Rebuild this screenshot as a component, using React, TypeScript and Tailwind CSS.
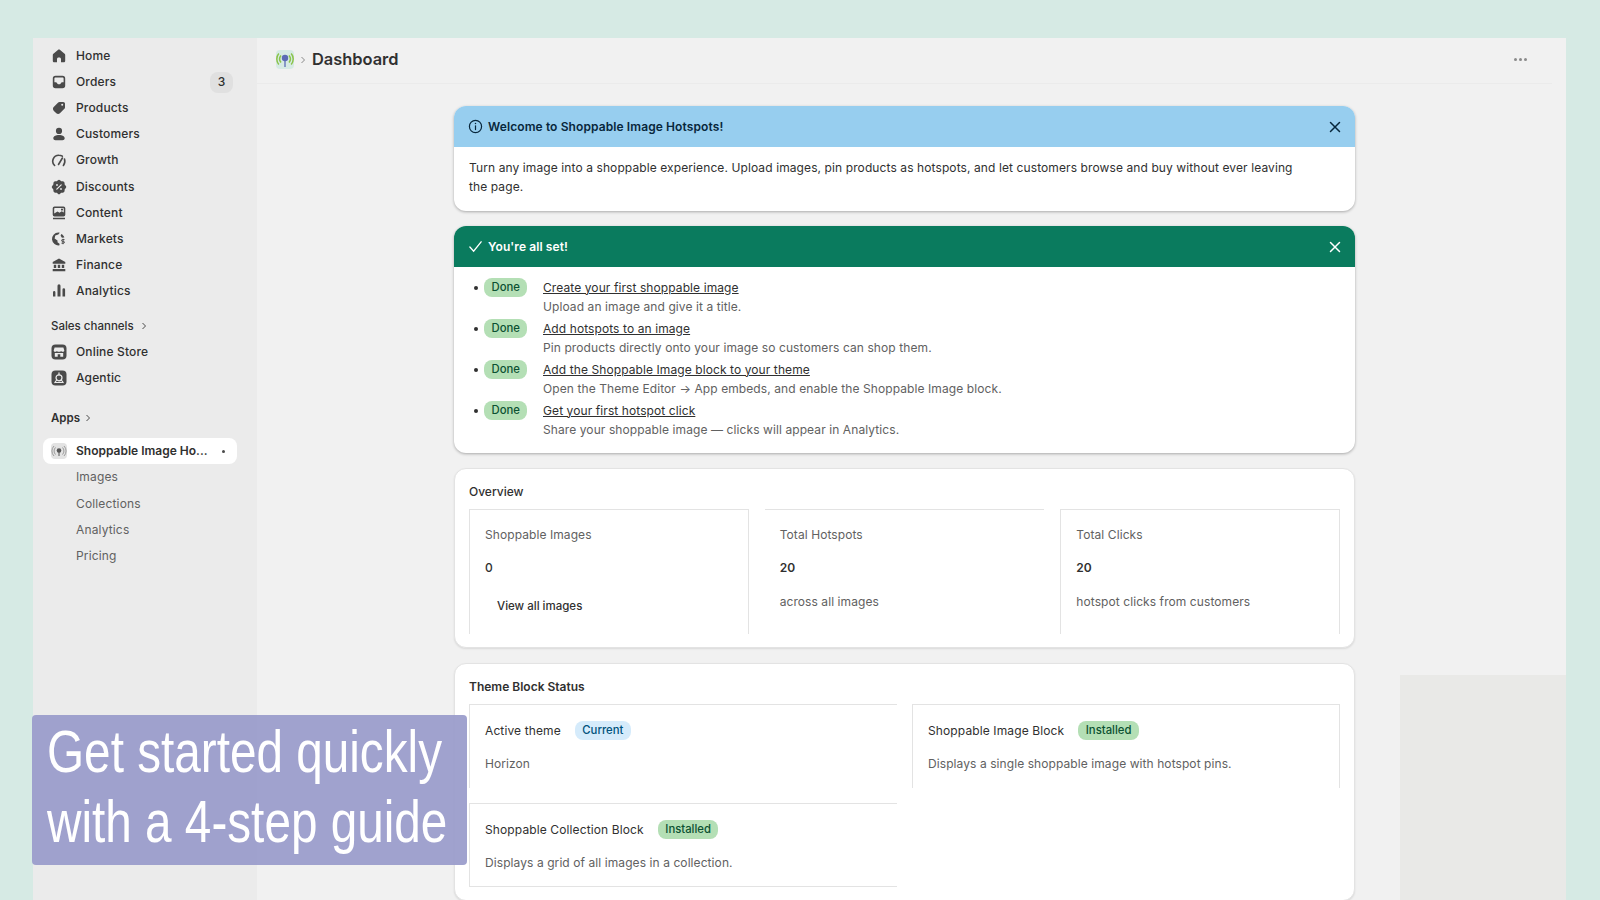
const navIcons: Record<string, React.ReactNode> = {
  home: <path d="M6.900 2 2.400 5.700C2 6 1.800 6.500 1.800 7v5.700c0 .9.700 1.600 1.600 1.600h2.600v-3.200c0-.9.700-1.600 1.600-1.600h.8c.9 0 1.600.7 1.600 1.600v3.200h2.600c.9 0 1.600-.7 1.600-1.600V7c0-.5-.2-1-.6-1.300L9.100 2c-.6-.6-1.600-.6-2.200 0Z" />,
  orders: <path fillRule="evenodd" d="M4.500 1.800h7A2.700 2.700 0 0 1 14.200 4.500v7a2.700 2.700 0 0 1-2.700 2.700h-7a2.700 2.700 0 0 1-2.700-2.700v-7A2.700 2.700 0 0 1 4.500 1.800ZM3.400 8.200V4.600c0-.6.500-1.100 1.100-1.100h7c.6 0 1.100.5 1.100 1.100v3.600h-1.400c-.6 0-1 .3-1.200.8-.2.800-1 1.300-2 1.300s-1.800-.5-2-1.300c-.2-.5-.6-.8-1.200-.8H3.400Z" />,
  products: <path fillRule="evenodd" d="M8.500 2h3.700c1 0 1.800.8 1.800 1.800v3.700c0 .5-.2 1-.6 1.300l-4.500 4.500c-1 1-2.600 1-3.600 0l-2.600-2.600c-1-1-1-2.600 0-3.600l4.500-4.500c.3-.4.800-.6 1.300-.6Zm2.700 3.800a1 1 0 1 0 0-2 1 1 0 0 0 0 2Z" />,
  customers: <path d="M8 1.800a3.100 3.100 0 1 1 0 6.200 3.100 3.100 0 0 1 0-6.200ZM8 9c-3.200 0-5.700 1.300-5.700 3.300 0 1.200 1 1.900 2.200 1.900h7c1.200 0 2.200-.7 2.200-1.900C13.700 10.300 11.200 9 8 9Z" />,
  growth: <g fill="none" stroke="#4a4a4a" strokeWidth="1.600" strokeLinecap="round"><path d="M3.600 13.500A6 6 0 0 1 8 3.200c1.300 0 2.400.4 3.300 1" /><path d="M13.500 7c.7 2.300.3 4.700-1.100 6.500" /><path d="m7.500 12.500 3.900-6.500" /></g>,
  discounts: <><path fillRule="evenodd" d="M6.800 1.300a1.700 1.700 0 0 1 2.400 0l.6.6c.3.300.7.400 1 .4h.9c1 0 1.900.9 1.900 1.900v.9c0 .4.100.8.400 1l.7.7c.7.700.7 1.700 0 2.400l-.7.7c-.3.300-.4.700-.4 1v.9c0 1-.9 1.900-1.900 1.900h-.9c-.4 0-.8.100-1 .4l-.6.6c-.7.700-1.700.700-2.400 0l-.6-.6c-.3-.3-.7-.4-1-.4h-.9c-1 0-1.900-.9-1.900-1.900v-.9c0-.4-.1-.8-.4-1l-.7-.7a1.700 1.700 0 0 1 0-2.400l.7-.7c.3-.3.400-.7.400-1v-.9c0-1 .9-1.900 1.900-1.900h.9c.4 0 .8-.1 1-.4l.6-.6Z" /><path d="m5.800 10.200 4.400-4.400" stroke="#ebebeb" strokeWidth="1.200" strokeLinecap="round" /><circle cx="6" cy="6" r=".9" fill="#ebebeb" /><circle cx="10" cy="10" r=".9" fill="#ebebeb" /></>,
  content: <path fillRule="evenodd" d="M3.500 1.500h9a1.800 1.800 0 0 1 1.800 1.800v6.400a1.800 1.800 0 0 1-1.800 1.800h-9a1.800 1.800 0 0 1-1.800-1.800V3.300a1.800 1.800 0 0 1 1.800-1.800Zm-.3 6.700V3.700c0-.4.300-.7.700-.7h8.200c.4 0 .7.300.7.700v3.900l-2-1.300-2.300 1.500-2-1.200-3.300 1.800ZM11 5.700a1.100 1.100 0 1 0 0-2.200 1.100 1.100 0 0 0 0 2.200ZM2 12.800h12v1.500H2v-1.500Z" />,
  markets: <><path d="M7.300 1.600a6.400 6.400 0 1 0 1.200 12.700v-1.600L6.500 11.200V9.500L3.600 7.400l.7-2.800 3-1 1.500-1.900a6 6 0 0 0-1.500-.1Z" /><path d="M10.300 3c1.400.7 2.500 1.900 3 3.400l-2.400.3-1.300-2 .7-1.700Z" /><path d="M13.500 8.600h-2a.9.900 0 0 0 0 1.800h1a.9.900 0 0 1 0 1.800h-2M12 7.800v5.400" fill="none" stroke="#4a4a4a" strokeWidth="1" /></>,
  finance: <path d="M8 1.500 14.300 5v1.700H1.700V5L8 1.500ZM2.800 7.700h2.400V11H2.800V7.700Zm4 0h2.400V11H6.800V7.700Zm4 0h2.400V11h-2.400V7.700ZM1.700 12h12.600v2.200H1.700V12Z" />,
  analytics: <path d="M6.500 2.800a1.500 1.500 0 0 1 3 0v10.600h-3V2.800ZM11.500 6.500a1.300 1.300 0 0 1 2.600 0v6.900h-2.600V6.500ZM2 9.300a1.200 1.200 0 0 1 2.400 0v4.100H2V9.300Z" />,
  store: <><rect x=".5" y=".5" width="15" height="15" rx="4" /><path d="M3.600 3.500h8.800l.9 3c0 .7-.7 1.300-1.400 1.300-.7 0-1.400-.4-1.800-.9-.3.500-1.200.9-2.100.9s-1.800-.4-2.100-.9c-.4.500-1.100.9-1.800.9-.7 0-1.400-.6-1.400-1.300l.9-3Z" fill="#ebebeb" /><path d="M3.800 9h8.400v3.800H9.300v-2.600H6.700v2.600H3.800V9Z" fill="#ebebeb" /></>,
  agentic: <><rect x=".5" y=".5" width="15" height="15" rx="4" /><circle cx="8" cy="7.800" r="3" fill="none" stroke="#ebebeb" strokeWidth="1.200" /><path d="M3.800 12.500 5.700 10M12.200 12.500 10.300 10M8 2.800v2M4 12.500h8" stroke="#ebebeb" strokeWidth="1.200" strokeLinecap="round" /></>,
}

function NavIcon({ name }: { name: string }) {
  return (
    <svg viewBox="0 0 16 16" fill="#4a4a4a" className="h-4 w-4 shrink-0">
      {navIcons[name]}
    </svg>
  )
}

function Chevron() {
  return (
    <svg viewBox="0 0 8 8" className="h-2 w-2" fill="none" stroke="#4a4a4a" strokeWidth="1">
      <path d="m2.500 1 3 3-3 3" />
    </svg>
  )
}

function CloseIcon({ color }: { color: string }) {
  return (
    <svg viewBox="0 0 12 12" className="h-3 w-3" fill="none" stroke={color} strokeWidth="1.500" strokeLinecap="round">
      <path d="m1.500 1.500 9 9M10.500 1.500l-9 9" />
    </svg>
  )
}

function Badge({ tone, children }: { tone: 'green' | 'blue'; children: string }) {
  return (
    <span className={tone === 'green'
      ? 'inline-flex h-[19px] items-center rounded-lg bg-[#b4dfb5] px-[7.500px] text-[11.300px] font-medium text-[#0c5132]'
      : 'inline-flex h-[19px] items-center rounded-lg bg-[#d5ebfb] px-[7.500px] text-[11.300px] font-medium text-[#00527c]'}>
      {children}
    </span>
  )
}

const mainNav = [
  { icon: 'home', label: 'Home' },
  { icon: 'orders', label: 'Orders', count: 3 },
  { icon: 'products', label: 'Products' },
  { icon: 'customers', label: 'Customers' },
  { icon: 'growth', label: 'Growth' },
  { icon: 'discounts', label: 'Discounts' },
  { icon: 'content', label: 'Content' },
  { icon: 'markets', label: 'Markets' },
  { icon: 'finance', label: 'Finance' },
  { icon: 'analytics', label: 'Analytics' },
]

const steps = [
  { title: 'Create your first shoppable image', desc: 'Upload an image and give it a title.' },
  { title: 'Add hotspots to an image', desc: 'Pin products directly onto your image so customers can shop them.' },
  { title: 'Add the Shoppable Image block to your theme', desc: 'Open the Theme Editor → App embeds, and enable the Shoppable Image block.' },
  { title: 'Get your first hotspot click', desc: 'Share your shoppable image — clicks will appear in Analytics.' },
]

function NavRow({ icon, label, count }: { icon: string; label: string; count?: number }) {
  return (
    <div className="flex h-[26.100px] items-center pl-[18px] pr-6">
      <NavIcon name={icon} />
      <span className="ml-[9px] text-xs font-medium tracking-[0.15px] text-[#303030]">{label}</span>
      {count !== undefined && (
        <span className="ml-auto flex h-[21px] w-[23px] items-center justify-center rounded-lg bg-[#e0e0e0] text-xs font-medium text-[#303030]">{count}</span>
      )}
    </div>
  )
}

function Sidebar() {
  return (
    <aside className="w-[224px] shrink-0 bg-[#ebebeb] pt-[5px]">
      {mainNav.map((item) => <NavRow key={item.label} {...item} />)}
      <div className="mt-[10px] flex h-[25px] items-center gap-1.5 pl-[18px] text-[11.500px] font-medium text-[#303030]">
        Sales channels <Chevron />
      </div>
      <NavRow icon="store" label="Online Store" />
      <NavRow icon="agentic" label="Agentic" />
      <div className="mt-[14px] flex h-[26px] items-center gap-1 pl-[18px] text-[11.500px] font-semibold text-[#303030]">
        Apps <Chevron />
      </div>
      <div className="ml-[10px] mr-[20px] mt-[7px] flex h-[26px] items-center rounded-lg bg-white pl-[8px] pr-[12px]">
        <span className="flex h-4 w-4 items-center justify-center rounded-sm bg-[#e3e3e3]">
          <svg viewBox="0 0 16 16" className="h-4 w-4" fill="none" stroke="#9a9a9a" strokeWidth="1">
            <path d="M4.500 4.500a5 5 0 0 0 0 7M11.500 4.500a5 5 0 0 1 0 7M3 3a7 7 0 0 0 0 10M13 3a7 7 0 0 1 0 10" />
            <circle cx="8" cy="7.500" r="2.300" fill="#555" stroke="none" />
            <path d="M8 9v4" stroke="#555" />
          </svg>
        </span>
        <span className="ml-[9px] text-xs font-semibold text-[#303030]">Shoppable Image Ho...</span>
        <span className="ml-auto h-[3px] w-[3px] rounded-full bg-[#4a4a4a]" />
      </div>
      {['Images', 'Collections', 'Analytics', 'Pricing'].map((s) => (
        <div key={s} className="flex h-[26.300px] items-center pl-[43px] text-xs tracking-[0.15px] text-[#616161]">{s}</div>
      ))}
    </aside>
  )
}

function Card({ children, strong }: { children: React.ReactNode; strong?: boolean }) {
  return (
    <section className={strong
      ? 'overflow-hidden rounded-xl bg-white shadow-[0_1px_3px_rgba(0,0,0,0.3)]'
      : 'overflow-hidden rounded-xl border border-[#e3e3e3] bg-white shadow-[0_1px_2px_rgba(0,0,0,0.1)]'}>
      {children}
    </section>
  )
}

function OverviewTile({ label, value, note, link, sides = true }: { label: string; value: string; note?: string; link?: string; sides?: boolean }) {
  return (
    <div className={sides
      ? 'h-[125px] border-x border-t border-[#e3e3e3] px-[15px] pt-4'
      : 'h-[125px] border-t border-[#e3e3e3] px-[15px] pt-4'}>
      <p className="text-xs leading-[18px] tracking-[0.08px] text-[#616161]">{label}</p>
      <p className={note ? 'mt-[15px] text-xs font-semibold leading-[18px] text-[#303030]' : 'mt-[15px] text-xs font-medium leading-[18px] text-[#303030]'}>{value}</p>
      {note && <p className="mt-4 text-xs leading-[18px] tracking-[0.08px] text-[#616161]">{note}</p>}
      {link && <p className="ml-3 mt-5 text-[11.500px] font-medium leading-[18px] text-[#303030]">{link}</p>}
    </div>
  )
}

function BlockTile({ title, tone, badge, desc, className }: { title: string; tone: 'green' | 'blue'; badge: string; desc: string; className: string }) {
  return (
    <div className={className}>
      <div className="flex h-[19px] items-center gap-[14px]">
        <span className="text-xs tracking-[0.12px] text-[#303030]">{title}</span>
        <Badge tone={tone}>{badge}</Badge>
      </div>
      <p className="mt-[14px] text-xs leading-[20px] tracking-[0.08px] text-[#616161]">{desc}</p>
    </div>
  )
}

export default function App() {
  return (
    <div className="relative flex h-[900px] overflow-hidden bg-[#d6eae4] pl-[33px] pr-[34px] pt-[38px] font-['Inter',sans-serif]">
      <Sidebar />
      <main className="relative flex-1 overflow-hidden bg-[#f1f1f1]">
        <div className="absolute bottom-0 right-0 h-[225px] w-[166px] bg-[#e9e9e7]" />
        <header className="mr-[14px] flex h-[46px] items-center border-b border-[#ebebeb] pb-[2px] pl-[19px] pr-[25px]">
          <span className="flex h-[19px] w-[18px] items-center justify-center rounded-sm bg-[#d6eae4]">
            <svg viewBox="0 0 18 19" className="h-[19px] w-[18px]" fill="none">
              <path d="M5 5.500a5.500 5.500 0 0 0 0 7M13 5.500a5.500 5.500 0 0 1 0 7M2.800 3.500a8.500 8.500 0 0 0 0 11M15.200 3.500a8.500 8.500 0 0 1 0 11" stroke="#8bc34a" strokeWidth="1.500" />
              <circle cx="9" cy="8" r="3.200" fill="#5c6bb5" />
              <path d="M9 9v8" stroke="#5c6bb5" strokeWidth="1.300" />
            </svg>
          </span>
          <svg viewBox="0 0 8 8" className="ml-[5px] h-2 w-2" fill="none" stroke="#8a8a8a" strokeWidth="1"><path d="m2.500 1 3 3-3 3" /></svg>
          <h1 className="ml-[5px] text-[16.400px] font-semibold text-[#303030]">Dashboard</h1>
          <div className="ml-auto flex gap-[2px]">
            <span className="h-[3px] w-[3px] rounded-full bg-[#8a8a8a]" />
            <span className="h-[3px] w-[3px] rounded-full bg-[#8a8a8a]" />
            <span className="h-[3px] w-[3px] rounded-full bg-[#8a8a8a]" />
          </div>
        </header>

        <div className="relative ml-[197px] flex w-[901px] flex-col gap-[15px] pt-[22px]">
          <Card strong>
            <div className="flex h-[41px] items-center bg-[#97ceef] pl-[14px] pr-[14px]">
              <svg viewBox="0 0 16 16" className="h-[15px] w-[15px]" fill="none" stroke="#08273c" strokeWidth="1.300">
                <circle cx="8" cy="8" r="6.500" />
                <path d="M8 7.300v4" strokeLinecap="round" />
                <circle cx="8" cy="4.900" r=".8" fill="#08273c" stroke="none" />
              </svg>
              <h2 className="ml-[5px] text-xs font-semibold tracking-[0.1px] text-[#08273c]">Welcome to Shoppable Image Hotspots!</h2>
              <span className="ml-auto"><CloseIcon color="#08273c" /></span>
            </div>
            <p className="h-[64px] py-[11px] pl-[15px] pr-[60px] text-xs leading-[19px] tracking-[0.1px] text-[#303030]">
              Turn any image into a shoppable experience. Upload images, pin products as hotspots, and let customers browse and buy without ever leaving the page.
            </p>
          </Card>

          <Card strong>
            <div className="flex h-[41px] items-center bg-[#0a7b5e] pl-[14px] pr-[14px]">
              <svg viewBox="0 0 16 16" className="h-[15px] w-[15px]" fill="none" stroke="#fff" strokeWidth="1.400" strokeLinecap="round">
                <path d="m2 8.500 4 4.500 8-10" />
              </svg>
              <h2 className="ml-[5px] text-xs font-semibold tracking-[0.1px] text-white">You're all set!</h2>
              <span className="ml-auto"><CloseIcon color="#fff" /></span>
            </div>
            <ul className="h-[186px] pl-[20px] pt-[10.500px]">
              {steps.map((step) => (
                <li key={step.title} className="flex h-[41px] items-start">
                  <span className="mr-[6px] mt-[8px] h-1 w-1 rounded-full bg-[#303030]" />
                  <span className="flex w-[59px] shrink-0"><Badge tone="green">Done</Badge></span>
                  <div className="text-xs leading-[19px] tracking-[0.09px]">
                    <p className="font-normal text-[#303030] underline">{step.title}</p>
                    <p className="text-[#616161]">{step.desc}</p>
                  </div>
                </li>
              ))}
            </ul>
          </Card>

          <Card>
            <div className="h-[178px] px-[14px] pt-[14px]">
              <h2 className="text-xs font-medium leading-[18px] text-[#303030]">Overview</h2>
              <div className="mt-[8px] grid grid-cols-3 gap-4">
                <OverviewTile label="Shoppable Images" value="0" link="View all images" />
                <OverviewTile label="Total Hotspots" value="20" note="across all images" sides={false} />
                <OverviewTile label="Total Clicks" value="20" note="hotspot clicks from customers" />
              </div>
            </div>
          </Card>

          <Card>
            <div className="h-[236px] px-[14px] pt-[14px]">
              <h2 className="text-xs font-semibold leading-[18px] text-[#303030]">Theme Block Status</h2>
              <div className="mt-[8px] grid grid-cols-2 gap-x-[15px] gap-y-[15px]">
                <BlockTile title="Active theme" tone="blue" badge="Current" desc="Horizon" className="h-[84px] border-l border-t border-[#e3e3e3] pl-[15px] pt-4" />
                <BlockTile title="Shoppable Image Block" tone="green" badge="Installed" desc="Displays a single shoppable image with hotspot pins." className="h-[84px] border-x border-t border-[#e3e3e3] pl-[15px] pt-4" />
                <BlockTile title="Shoppable Collection Block" tone="green" badge="Installed" desc="Displays a grid of all images in a collection." className="h-[84px] border-y border-l border-[#e3e3e3] pl-[15px] pt-4" />
              </div>
            </div>
          </Card>
        </div>
      </main>

      <div className="absolute left-[32px] top-[715px] h-[150px] w-[435px] overflow-hidden rounded bg-[#9b9dcb]/95 pl-[15px] pt-[2px] font-['Liberation_Sans',sans-serif] text-[60px] leading-[70px] text-white">
        <p className="origin-left scale-x-[0.795] whitespace-nowrap">Get started quickly</p>
        <p className="origin-left scale-x-[0.795] whitespace-nowrap">with a 4-step guide</p>
      </div>
    </div>
  )
}
